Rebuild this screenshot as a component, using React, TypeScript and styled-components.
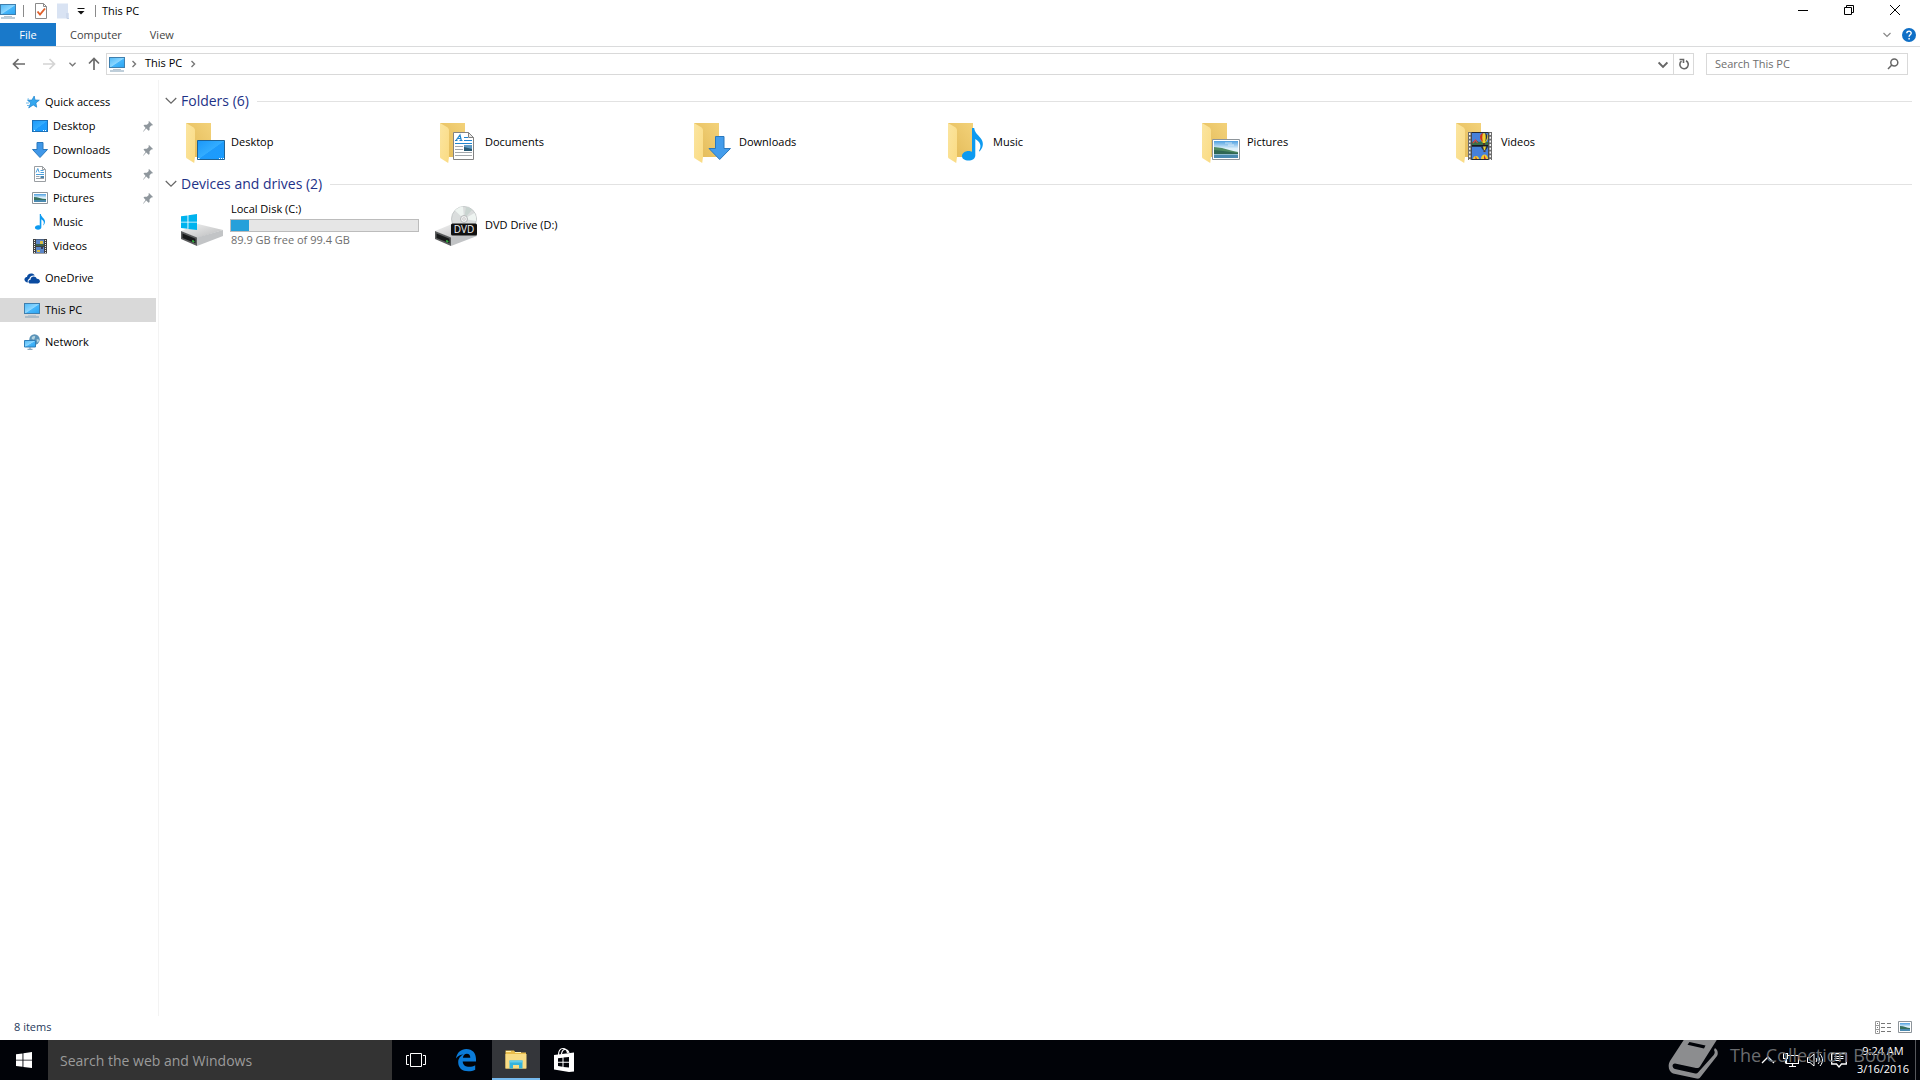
import React from "react";
import styled, { createGlobalStyle, css } from "styled-components";

const GlobalStyle = createGlobalStyle`
  *, *::before, *::after { box-sizing: border-box; }
  body {
    margin: 0;
    background: #fff;
    color: #000;
    font: 11px/16px "Open Sans", "Noto Sans", sans-serif;
  }
  button, input {
    margin: 0;
    padding: 0;
    border: 0;
    background: none;
    color: inherit;
    font: inherit;
  }
  a { color: inherit; text-decoration: none; }
  svg { display: block; flex: none; }
  h2, p, ul { margin: 0; padding: 0; }
  ul { list-style: none; }
`;

/* ---------- layout ---------- */

const Screen = styled.div`
  display: flex;
  flex-direction: column;
  min-height: 100vh;
`;

const TitleBar = styled.header`
  display: flex;
  align-items: flex-start;
  justify-content: space-between;
  height: 23px;
`;

const QuickTools = styled.div`
  display: flex;
  align-items: center;
`;

const ToolButton = styled.button<{ $width?: number }>`
  display: grid;
  place-items: center;
  width: ${(p) => p.$width ?? 22}px;
  height: 22px;
`;

const Separator = styled.span`
  width: 1px;
  height: 12px;
  margin: 0 6px 0 7px;
  background: #8a8a8a;
`;

const WindowButtons = styled.div`
  display: flex;
  align-items: center;
  padding-right: 2px;
`;

const WindowButton = styled.button`
  display: grid;
  place-items: center;
  width: 46px;
  height: 20px;
`;

const Ribbon = styled.div`
  display: flex;
  align-items: center;
  justify-content: space-between;
  height: 24px;
  border-bottom: 1px solid #dadbdc;
`;

const Tabs = styled.div`
  display: flex;
`;

const Tab = styled.button<{ $primary?: boolean }>`
  height: 23px;
  padding: 0 14px;
  color: #444;
  ${(p) =>
    p.$primary &&
    css`
      width: 56px;
      background: #1979ca;
      color: #fff;
    `}
`;

const RibbonTools = styled.div`
  display: flex;
  align-items: center;
  gap: 11px;
  padding-right: 4px;
`;

const PlainButton = styled.button`
  display: grid;
  place-items: center;
`;

const NavBar = styled.div`
  display: flex;
  align-items: center;
  padding: 6px 12px 5px 4px;
`;

const NavButton = styled.button<{ $width: number }>`
  display: grid;
  place-items: center;
  width: ${(p) => p.$width}px;
  height: 22px;
`;

const AddressBox = styled.div`
  display: flex;
  flex: 1;
  align-items: stretch;
  height: 22px;
  margin-right: 12px;
  border: 1px solid #d9d9d9;
`;

const Crumbs = styled.nav`
  display: flex;
  flex: 1;
  align-items: center;
  gap: 5px;
  padding-left: 2px;
`;

const CrumbButton = styled.button`
  padding: 0 2px 2px;
`;

const RefreshButton = styled(PlainButton)`
  width: 20px;
  border-left: 1px solid #d9d9d9;
`;

const SearchBox = styled.label`
  display: flex;
  align-items: center;
  width: 202px;
  height: 22px;
  padding: 0 8px;
  border: 1px solid #d9d9d9;
`;

const SearchInput = styled.input`
  flex: 1;
  min-width: 0;
  outline: 0;
  &::placeholder { color: #6d6d6d; opacity: 1; }
`;

const Body = styled.div`
  display: flex;
  flex: 1;
`;

const Sidebar = styled.nav`
  display: flex;
  flex-direction: column;
  gap: 8px;
  width: 159px;
  padding: 10px 2px 0 0;
  border-right: 1px solid #f3f3f3;
`;

const TreeLink = styled.a<{ $nested?: boolean; $selected?: boolean }>`
  display: flex;
  align-items: center;
  gap: 5px;
  height: 24px;
  padding: 0 3px 0 ${(p) => (p.$nested ? 32 : 24)}px;
  background: ${(p) => (p.$selected ? "#d9d9d9" : "transparent")};
`;

const TreeLabel = styled.span`
  flex: 1;
`;

const Main = styled.main`
  flex: 1;
  padding: 10px 8px 0 6px;
`;

const GroupTitle = styled.h2`
  display: flex;
  align-items: center;
  height: 22px;
  color: #1e3287;
  font-size: 14px;
  font-weight: 400;
  &::after {
    flex: 1;
    height: 1px;
    margin-left: 8px;
    background: #e2e2e2;
    content: "";
  }
`;

const GroupToggle = styled.button`
  display: flex;
  align-items: center;
  gap: 4px;
`;

const Tiles = styled.ul`
  display: flex;
  flex-wrap: wrap;
  padding: 0 0 1px 13px;
`;

const Tile = styled.li`
  width: 254px;
  height: 60px;
`;

const TileLink = styled.a`
  display: flex;
  align-items: center;
  gap: 4px;
  height: 60px;
`;

const DriveInfo = styled.div`
  width: 189px;
  padding-bottom: 2px;
`;

const Capacity = styled.div`
  height: 13px;
  margin-top: 2px;
  border: 1px solid #bcbcbc;
  background: #e6e6e6;
`;

const CapacityUsed = styled.div`
  height: 100%;
  background: #26a0da;
`;

const TileText = styled.p<{ $muted?: boolean }>`
  padding-left: 1px;
  color: ${(p) => (p.$muted ? "#6d6d6d" : "#000")};
`;

const StatusBar = styled.footer`
  display: flex;
  align-items: center;
  justify-content: space-between;
  height: 24px;
  padding: 0 8px 2px 14px;
  color: #1e395b;
`;

const ViewButtons = styled.div`
  display: flex;
  align-items: center;
  gap: 7px;
`;

const Taskbar = styled.footer`
  position: relative;
  display: flex;
  height: 40px;
  overflow: hidden;
  background: #010308;
  color: #fff;
`;

const TaskButton = styled.button<{ $active?: boolean; $wide?: boolean }>`
  display: grid;
  place-items: center;
  width: ${(p) => (p.$wide ? 52 : 48)}px;
  height: 40px;
  border-bottom: 2px solid ${(p) => (p.$active ? "#76b9ed" : "transparent")};
  border-top: 2px solid transparent;
  background: ${(p) => (p.$active ? "#34363a" : "none")};
`;

const TaskSearch = styled.input`
  width: 344px;
  padding: 2px 12px 0;
  background: #333;
  font-size: 14px;
  outline: 0;
  &::placeholder { color: #9b9b9b; opacity: 1; }
`;

const Tray = styled.div`
  display: flex;
  align-items: center;
  gap: 8px;
  margin-left: auto;
`;

const Clock = styled.time`
  display: block;
  padding: 0 6px 0 2px;
  line-height: 18px;
  text-align: center;
`;

const ShowDesktop = styled.button`
  width: 5px;
  height: 40px;
  margin-left: -8px;
  border-left: 1px solid #55575b;
`;

const Watermark = styled.div`
  position: absolute;
  right: 24px;
  bottom: 0;
  display: flex;
  align-items: center;
  gap: 12px;
  height: 40px;
  color: #6a6c6f;
  font-size: 18px;
  pointer-events: none;
`;

const WatermarkText = styled.span`
  padding-bottom: 10px;
`;

/* ---------- icons ---------- */

const Gradients = () => (
  <svg width="0" height="0" aria-hidden="true">
    <defs>
      <linearGradient id="screen" x1="0" y1="0" x2="1" y2="1">
        <stop offset="0" stopColor="#4db8f7" />
        <stop offset=".5" stopColor="#8bd6ff" />
        <stop offset=".55" stopColor="#45b6fb" />
        <stop offset="1" stopColor="#2ba3f0" />
      </linearGradient>
      <linearGradient id="desk" x1="0" y1="0" x2="1" y2="1">
        <stop offset="0" stopColor="#1b97f8" />
        <stop offset=".5" stopColor="#33adff" />
        <stop offset=".52" stopColor="#1e9bfb" />
        <stop offset="1" stopColor="#1a9cff" />
      </linearGradient>
      <linearGradient id="flap" x1="0" y1="0" x2="1" y2="1">
        <stop offset="0" stopColor="#fbe5a0" />
        <stop offset="1" stopColor="#fadb83" />
      </linearGradient>
      <linearGradient id="back" x1="1" y1="0" x2="0" y2="1">
        <stop offset="0" stopColor="#f3d27a" />
        <stop offset="1" stopColor="#e2b956" />
      </linearGradient>
      <linearGradient id="metal" x1="0" y1="0" x2="1" y2="1">
        <stop offset="0" stopColor="#f2f2f2" />
        <stop offset="1" stopColor="#b9babb" />
      </linearGradient>
      <linearGradient id="sky" x1="0" y1="0" x2="0" y2="1">
        <stop offset="0" stopColor="#4d9fe0" />
        <stop offset=".45" stopColor="#dff1fb" />
        <stop offset="1" stopColor="#dff1fb" />
      </linearGradient>
    </defs>
  </svg>
);

const MonitorIcon = () => (
  <svg width="16" height="16" viewBox="0 0 16 16">
    <rect x=".5" y="1.5" width="15" height="10" fill="url(#screen)" stroke="#3f7fae" />
    <path d="M4 13.5h8" stroke="#b9c6d0" />
    <path d="M1 15h14" stroke="#7f9db4" />
  </svg>
);

const StarIcon = () => (
  <svg width="16" height="16" viewBox="0 0 16 16">
    <path d="M10.200 2l.8 4 4.300.2-3.400 2.700.8 4.300-3.500-2.300-4.500 3 2-5L3.500 6.200l4.400-.1z" fill="#35a7ee" stroke="#1b83cf" strokeWidth=".7" />
    <path d="M2 9h3M3 11.500h2M5 5H3.500" stroke="#6bb9ea" />
  </svg>
);

const DesktopIcon = () => (
  <svg width="16" height="16" viewBox="0 0 16 16">
    <rect x=".5" y="2.500" width="15" height="11" fill="url(#desk)" stroke="#1c71b8" />
    <path d="M2 12.500h1M11 12.500h1M13 12.500h1" stroke="#fff" />
  </svg>
);

const DownloadIcon = () => (
  <svg width="16" height="16" viewBox="0 0 16 16">
    <path d="M5 .5h6v7h4.500L8 15.500.500 7.500H5z" fill="#3f97e8" stroke="#2b78bd" />
  </svg>
);

const DocumentIcon = () => (
  <svg width="16" height="16" viewBox="0 0 16 16">
    <path d="M2.500.500h8l3 3v12h-11z" fill="#fff" stroke="#9a9ea2" />
    <path d="M10.500.500v3h3" fill="none" stroke="#9a9ea2" />
    <path d="M4 6.500l1.800-4 1.400 4M8.500 4.500h3M8.500 6.500h3.500M4 8.500h8" fill="none" stroke="#4a9fdc" />
    <path d="M4 10.500h3.500M4 12.500h8" stroke="#9aa3ab" />
    <path d="M8.500 10h3.500v2H8.500z" fill="#4c84ab" />
  </svg>
);

const Landscape = () => (
  <>
    <path d="M.500.500h27v20H.500z" fill="#fff" stroke="#8d949a" />
    <path d="M2 2h24v17H2z" fill="url(#sky)" />
    <path d="M2 8c3 0 5 1 8 1 5 1 9 3 16 4v2H2z" fill="#4f8a61" />
    <path d="M2 11l9 1 15 2v2H2z" fill="#2f6753" />
    <path d="M2 15h24v4H2z" fill="#4a8ab0" />
    <path d="M2 15.500h24" stroke="#91bccf" />
    <path d="M13 4h7M16 6h6" stroke="#fff" opacity=".6" />
  </>
);

const PictureIcon = () => (
  <svg width="16" height="16" viewBox="0 0 16 16">
    <path d="M.500 2.500h15v11H.500z" fill="#fff" stroke="#8d949a" />
    <path d="M2 4h12v8H2z" fill="url(#sky)" />
    <path d="M2 7c4 0 7 2 12 2v2H2z" fill="#36705f" />
    <path d="M2 10h12v2H2z" fill="#4a8ab0" />
  </svg>
);

const Note = () => (
  <path
    d="M10 0h2.200c.5 4.500 3.500 6.500 6.300 10 3.200 4 3.300 8.500-.5 13-.7.8-1.400.4-.8-.5 2.500-4.500 1.300-8.500-3.900-11.500v16.500c0 3-3 5-6.800 5S0 30.800 0 28s3-5 6.500-5c1.500 0 2.500.2 3.500.8z"
    fill="#0d9af0"
  />
);

const MusicIcon = () => (
  <svg width="16" height="16" viewBox="-6 0 33 33"><Note /></svg>
);

const Balloon = ({ y }: { y: number }) => (
  <g transform={`translate(0 ${y})`}>
    <path d="M12 4c0-5 8-5 8 0 0 3-2 5-3 6h-2c-1-1-3-3-3-6z" fill="#f2d12d" />
    <path d="M12 4c0-3 2-4 3-4-1 3-1 6 0 9-2-1-3-3-3-5z" fill="#c4302c" />
    <path d="M17 0c3 1 3 5 0 9 1-3 1-6 0-9z" fill="#26334c" />
    <path d="M15 10h2v2h-2z" fill="#5b3b21" />
  </g>
);

const Film = () => (
  <>
    <path d="M0 0h24v28H0z" fill="#6d6d6d" />
    <path d="M1.750 1v27M22.250 1v27" stroke="#f4f4f4" strokeWidth="1.500" strokeDasharray="2 1.700" />
    <path d="M3.500 0h17v28h-17z" fill="#232a35" />
    <path d="M4 1h16v12H4zM4 14.500h16V27H4z" fill="#4580da" />
    <path d="M4 10l4-2 3 2 3-1 6 1v3H4z" fill="#3a7048" />
    <path d="M5 11l2.500-3 2 3" stroke="#d6404c" strokeWidth="1.200" fill="none" />
    <Balloon y={1} />
    <path d="M4 13h16v1.500H4z" fill="#171b22" />
    <path d="M13 14.500h7c-.5 2-2 3-2.500 4h-2c-.8-1-2.200-2-2.500-4z" fill="#26334c" />
    <path d="M15 14.500h3l-1 3.500h-1z" fill="#f2d12d" />
    <path d="M15.500 18.500h2V20h-2z" fill="#5b3b21" />
    <path d="M5 27c0-4 6-4 6 0zM13 27c0-6 7-6 7 0z" fill="#f2c92d" />
    <path d="M7.500 24l1.500 3H7.500zM16 23l2 4h-2z" fill="#c4302c" />
  </>
);

const VideoIcon = () => (
  <svg width="16" height="16" viewBox="0 0 16 16">
    <path d="M1 1h14v14.500H1z" fill="#414141" />
    <path d="M2.500 2v13M13.500 2v13" stroke="#eee" strokeDasharray="1 1" />
    <path d="M4 1.500h8V8H4zM4 9h8v6H4z" fill="#5c86c8" />
    <path d="M8 3h3v3H8zM5 12h3v2H5z" fill="#d8bd45" />
    <path d="M4 6h8v2H4z" fill="#3b6350" />
    <path d="M9 9h2v2H9z" fill="#33405c" />
  </svg>
);

const CloudIcon = () => (
  <svg width="16" height="16" viewBox="0 0 16 16">
    <path d="M4 12.500C1 12.500-.5 9.800 1 8c.5-.8 1.300-1 2-1 .2-2.500 2.500-4 5-3.500 1.300.2 2.200 1 2.700 2C7.500 5 5.500 7 5.300 9 3.800 9.500 3.400 11 4 12.500z" fill="#0a4ba0" />
    <path d="M6.500 13.500c-2.700 0-2.800-3.600 0-3.800C6.600 6 11.500 5.300 12.800 8.800 16.500 8.700 17 13 14 13.500z" fill="#0a4ba0" />
  </svg>
);

const NetworkIcon = () => (
  <svg width="16" height="16" viewBox="0 0 16 16">
    <circle cx="10.500" cy="5.500" r="5.200" fill="#5b93b8" />
    <path d="M8 3c1.500-1.500 4-1 3 .5s0 2-1.500 2S7 4.500 8 3zM12.500 5.500c1.500-.8 2.500 0 2.500.8s-1 2.200-1.700 2.200z" fill="#b3d3df" />
    <path d="M.5 6.500h11v6.500H.5z" fill="url(#screen)" stroke="#2f7fb8" />
    <path d="M6 13v2M3.500 15.300h5" stroke="#6d93ae" />
  </svg>
);

const PinIcon = () => (
  <svg width="10" height="11" viewBox="0 0 10 11">
    <path d="M6 0l4 4-1 .6-.8-.1-1.700 2 .1 2.500-1 .8L3.300 7.500.300 10.800 0 10.500l2.600-3.600L.500 4.500l1-.8 2.400.1L5.800 2 5.500.700z" fill="#8f979d" />
  </svg>
);

const ChevronDown = ({ size = 8, color = "#777", width = 1 }: { size?: number; color?: string; width?: number }) => (
  <svg width={size} height={size} viewBox="0 0 8 8">
    <path d="M.5 2l3.500 3.500L7.500 2" fill="none" stroke={color} strokeWidth={width} />
  </svg>
);

const ChevronRight = () => (
  <svg width="8" height="8" viewBox="0 0 8 8">
    <path d="M2.500 1l3 3-3 3" fill="none" stroke="#777" strokeWidth="1.400" />
  </svg>
);

const ArrowIcon = ({ rotate = 0, color = "#6b6b6b" }: { rotate?: number; color?: string }) => (
  <svg width="14" height="14" viewBox="0 0 14 14">
    <path d="M13 7H2M6.500 2L1.500 7l5 5" fill="none" stroke={color} strokeWidth="1.700" transform={`rotate(${rotate} 7 7)`} />
  </svg>
);

const WindowsLogo = () => (
  <path d="M0 2.300L6.500 1.400v6.300H0zM7.400 1.200L16 0v7.700H7.400zM0 8.600h6.500v6.200L0 13.900zM7.400 8.600H16V16l-8.600-1.100z" />
);

const DriveBody = () => (
  <>
    <path d="M3 30l17-7 25 6-26 8z" fill="url(#metal)" />
    <path d="M3 30l16 6.500V45L3 38z" fill="#5a5c5d" />
    <path d="M4.500 32.500l13 5.300v4.400l-13-5.300z" fill="#17191a" />
    <path d="M19 36.500L45 29v6L19 45z" fill="#c2c4c6" />
    <path d="M14.500 39.500l1.500.600v1l-1.500-.600z" stroke="#3ee04b" strokeWidth=".8" />
  </>
);

const DiskIcon = () => (
  <svg width="48" height="48" viewBox="0 0 48 48">
    <DriveBody />
    <g transform="translate(3 13)" fill="#00b3ee"><WindowsLogo /></g>
  </svg>
);

const DvdIcon = () => (
  <svg width="48" height="48" viewBox="0 0 48 48">
    <DriveBody />
    <circle cx="32" cy="18" r="12.500" fill="#dadddd" stroke="#bdc1c2" strokeWidth=".8" />
    <path d="M32 18L23 9.500a12.300 12.300 0 0 1 8-3.700zM32 18l12 2a12 12 0 0 0-1.500-8z" fill="#eef4f1" />
    <path d="M32 18l2-12a12 12 0 0 1 6 3z" fill="#c9d4d0" />
    <circle cx="32" cy="18" r="3.500" fill="#f2f2f2" stroke="#b5b8b9" />
    <circle cx="32" cy="18" r="1.300" fill="#fff" stroke="#999" strokeWidth=".5" />
    <rect x="19" y="22.500" width="26" height="12" rx="1.500" fill="#111" />
    <text x="32" y="32" fill="#f1f1f1" fontSize="10" textAnchor="middle">DVD</text>
  </svg>
);

const FolderIcon = ({ children }: { children: React.ReactNode }) => (
  <svg width="48" height="48" viewBox="0 0 48 48">
    <path d="M8 5h25v34H12z" fill="url(#back)" />
    <path d="M8 5l6 3.500c2 1.200 3 2 3 4V39l-.800 6L9 40.500c-.7-.4-1-.8-1-1.700z" fill="url(#flap)" />
    {children}
  </svg>
);

const DesktopArt = () => (
  <g transform="translate(19 22)">
    <path d="M.5.500h27v19H.5z" fill="url(#desk)" stroke="#1f6396" />
    <path d="M1 18.500h1.500M22 18.500h1M24 18.500h1M26 18.500h1" stroke="#fff" />
  </g>
);

const DocumentArt = () => (
  <g transform="translate(21 14)">
    <path d="M.5.500h15l5 5v22H.5z" fill="#fff" stroke="#828282" />
    <path d="M15.500.500v5h5z" fill="#e7e7e7" stroke="#828282" />
    <path d="M3 8.500L7 3l1.300 5.500M5 6.500h3M2 8.500h2.500M6.500 8.500h3M11 5.500h4M11 8.500h8M2 11.500h17" fill="none" stroke="#2186cf" strokeWidth="1.200" />
    <path d="M2 14.500h8M2 17.500h8M2 20.500h17M2 23.500h17" stroke="#a3a8ad" />
    <path d="M11 13h8v6h-8z" fill="#5f9ac2" />
    <path d="M11 15l8 2v2h-8z" fill="#285a74" />
  </g>
);

const FolderArt: Record<string, React.ReactNode> = {
  Desktop: <DesktopArt />,
  Documents: <DocumentArt />,
  Downloads: <path d="M29.500 18.500h8.500v12h6.500L33.700 41.500 23 30.500h6.500z" fill="#439ceb" stroke="#2b78bd" />,
  Music: <g transform="translate(22 10)"><Note /></g>,
  Pictures: <g transform="translate(18 21)"><Landscape /></g>,
  Videos: <g transform="translate(20 14)"><Film /></g>,
};

const CheckPageIcon = () => (
  <svg width="14" height="16" viewBox="0 0 14 16">
    <path d="M1.500.500h8l3 3v12h-11z" fill="#fff" stroke="#8a8a8a" />
    <path d="M9.500.500v3h3" fill="none" stroke="#8a8a8a" />
    <path d="M3.500 8.500l2.500 3L11 5.500" fill="none" stroke="#e0602c" strokeWidth="1.900" />
  </svg>
);

const NewFolderIcon = () => (
  <svg width="14" height="16" viewBox="0 0 14 16">
    <path d="M1 .500h11v9l1 1v5H1z" fill="#d9e3f3" />
    <path d="M11 10v5.500h2" fill="none" stroke="#c3d0e6" />
  </svg>
);

const CustomizeIcon = () => (
  <svg width="8" height="8" viewBox="0 0 8 8">
    <path d="M.5 1.500h7" stroke="#111" />
    <path d="M.5 4h7L4 7.500z" fill="#111" />
  </svg>
);

const TaskViewIcon = () => (
  <svg width="20" height="16" viewBox="0 0 20 16" fill="none" stroke="#fff">
    <path d="M4.500 1.500h11v13h-11zM3 3.500H.5v9H3M17 3.500h2.500v9H17" />
  </svg>
);

const EdgeIcon = () => (
  <svg width="22" height="24" viewBox="0 0 22 24">
    <path
      d="M1 10.500C2 4.500 6 1 11.300 1 17.500 1 21 5.300 21 11v2.500H7.700c.3 4 3.300 5.300 6.500 5.300 2.300 0 4.200-.6 6-1.600v4.600c-2 1-4.300 1.500-7 1.500-6 0-10-3.300-10-9C3.200 10.500 5.500 7.700 8.700 6.300 5.500 6.500 3 8 1 10.500zM7.900 9.800h7.400c0-2.600-1.300-4-3.400-4-2.200 0-3.600 1.500-4 4z"
      fill="#0a7bd8"
      fillRule="evenodd"
    />
  </svg>
);

const ExplorerIcon = () => (
  <svg width="22" height="20" viewBox="0 0 22 20">
    <path d="M.5.500H9l1.500 2H21v16H.5z" fill="#e9bd4c" />
    <path d="M.5 4H21.500v14.500H.5z" fill="#f8dc85" />
    <path d="M1 1.500h5M10 2.500h6" stroke="#fff1b0" />
    <path d="M4.500 18.500v-8h13v8h-3.500v-3.500h-6v3.500z" fill="#35b3dc" />
    <path d="M4.500 10.500h13v2h-13z" fill="#62cdec" />
  </svg>
);

const StoreIcon = () => (
  <svg width="22" height="26" viewBox="0 0 22 26">
    <path d="M5.500 8c0-4 1.500-6.500 4.500-6.500 2.500 0 4 1.500 4.500 4.500M8.500 7C9 4 10 2.500 12 2.500S15.500 4 16 6" fill="none" stroke="#fff" strokeWidth="1.200" />
    <path d="M1 8l20-2.500V24.500L16 25 1 22.500z" fill="#fff" />
    <path d="M5 11.300l4.500-.6v4H5zM10.500 10.600l5.500-.7v4.800h-5.500zM5 15.700h4.500v4L5 19.100zM10.500 15.700H16v4.900l-5.500-.7z" fill="#010308" />
  </svg>
);

const BookIcon = () => (
  <svg width="50" height="40" viewBox="0 0 50 40">
    <path d="M17-2L2 21c-2.500 4-1.500 11 3 12.500L28.500 38.500c2 .4 3 0 4-1.500L49 16c1-1.500 1-4 0-6l-2-2-1 2c1 2 1 3-.3 5L30 32.500c-.7 1-1.500 1.300-2.700 1L7 29c-3-1-3.500-5.500 0-5.500L28 28c1.800.3 3-.1 4-1.500L50-2z" fill="#8c8d8f" />
    <path d="M21.500 2l16 3.500-1.500 3-16.500-3.700z" fill="#010308" />
  </svg>
);

/* ---------- data ---------- */

type TreeItem = { label: string; icon: React.ReactNode; nested?: boolean; pinned?: boolean; selected?: boolean };

const tree: TreeItem[][] = [
  [
    { label: "Quick access", icon: <StarIcon /> },
    { label: "Desktop", icon: <DesktopIcon />, nested: true, pinned: true },
    { label: "Downloads", icon: <DownloadIcon />, nested: true, pinned: true },
    { label: "Documents", icon: <DocumentIcon />, nested: true, pinned: true },
    { label: "Pictures", icon: <PictureIcon />, nested: true, pinned: true },
    { label: "Music", icon: <MusicIcon />, nested: true },
    { label: "Videos", icon: <VideoIcon />, nested: true },
  ],
  [{ label: "OneDrive", icon: <CloudIcon /> }],
  [{ label: "This PC", icon: <MonitorIcon />, selected: true }],
  [{ label: "Network", icon: <NetworkIcon /> }],
];

const folders = ["Desktop", "Documents", "Downloads", "Music", "Pictures", "Videos"];
const disk = { free: 89.9, total: 99.4 };

const Group = ({ title, children }: { title: string; children: React.ReactNode }) => (
  <section>
    <GroupTitle>
      <GroupToggle aria-expanded="true">
        <ChevronDown size={12} color="#666" width={0.8} />
        {title}
      </GroupToggle>
    </GroupTitle>
    <Tiles>{children}</Tiles>
  </section>
);

export default function App() {
  const used = ((disk.total - disk.free) / disk.total) * 100;
  return (
    <Screen>
      <GlobalStyle />
      <TitleBar>
        <QuickTools>
          <MonitorIcon />
          <Separator />
          <ToolButton aria-label="Properties"><CheckPageIcon /></ToolButton>
          <ToolButton aria-label="New folder"><NewFolderIcon /></ToolButton>
          <ToolButton $width={14} aria-label="Customize Quick Access Toolbar"><CustomizeIcon /></ToolButton>
          <Separator />
          This PC
        </QuickTools>
        <WindowButtons>
          <WindowButton aria-label="Minimize">
            <svg width="10" height="10" viewBox="0 0 10 10"><path d="M0 5.500h10" stroke="#000" /></svg>
          </WindowButton>
          <WindowButton aria-label="Restore">
            <svg width="10" height="10" viewBox="0 0 10 10" fill="none" stroke="#000">
              <path d="M.5 2.500h7v7h-7zM2.500 2.500v-2h7v7h-2" />
            </svg>
          </WindowButton>
          <WindowButton aria-label="Close">
            <svg width="10" height="10" viewBox="0 0 10 10"><path d="M0 0l10 10M10 0L0 10" stroke="#000" /></svg>
          </WindowButton>
        </WindowButtons>
      </TitleBar>

      <Ribbon>
        <Tabs>
          <Tab $primary>File</Tab>
          <Tab>Computer</Tab>
          <Tab>View</Tab>
        </Tabs>
        <RibbonTools>
          <PlainButton aria-label="Expand the Ribbon"><ChevronDown color="#888" width={1.2} /></PlainButton>
          <PlainButton aria-label="Help">
            <svg width="14" height="14" viewBox="0 0 14 14">
              <circle cx="7" cy="7" r="7" fill="#0f6fc6" />
              <path d="M4.800 5.300c0-3 4.600-2.800 4.400 0C9.100 6.800 7.100 6.900 7.100 8.700M7.100 10v1.500" fill="none" stroke="#fff" strokeWidth="1.400" />
            </svg>
          </PlainButton>
        </RibbonTools>
      </Ribbon>

      <NavBar>
        <NavButton $width={30} aria-label="Back"><ArrowIcon /></NavButton>
        <NavButton $width={30} aria-label="Forward"><ArrowIcon rotate={180} color="#d4d4d4" /></NavButton>
        <NavButton $width={17} aria-label="Recent locations"><ChevronDown size={7} width={1.5} /></NavButton>
        <NavButton $width={25} aria-label="Up"><ArrowIcon rotate={90} /></NavButton>
        <AddressBox>
          <Crumbs aria-label="Address">
            <MonitorIcon />
            <ChevronRight />
            <CrumbButton>This PC</CrumbButton>
            <ChevronRight />
          </Crumbs>
          <NavButton $width={20} aria-label="Previous locations"><ChevronDown size={10} width={1.5} color="#666" /></NavButton>
          <RefreshButton aria-label="Refresh">
            <svg width="12" height="12" viewBox="0 0 12 12" fill="none" stroke="#666" strokeWidth="1.600">
              <path d="M8 2.800A4.200 4.200 0 1 1 3.500 3.200M1.500 1.500h4V5" />
            </svg>
          </RefreshButton>
        </AddressBox>
        <SearchBox>
          <SearchInput type="search" placeholder="Search This PC" aria-label="Search This PC" />
          <svg width="12" height="12" viewBox="0 0 12 12" fill="none" stroke="#666" strokeWidth="1.500">
            <circle cx="7.300" cy="4.500" r="3.500" />
            <path d="M4.800 7L1 11" />
          </svg>
        </SearchBox>
      </NavBar>

      <Body>
        <Sidebar aria-label="Navigation pane">
          {tree.map((group, i) => (
            <ul key={i}>
              {group.map((item) => (
                <li key={item.label}>
                  <TreeLink href="#" $nested={item.nested} $selected={item.selected}>
                    {item.icon}
                    <TreeLabel>{item.label}</TreeLabel>
                    {item.pinned && <PinIcon />}
                  </TreeLink>
                </li>
              ))}
            </ul>
          ))}
        </Sidebar>
        <Main>
          <Group title="Folders (6)">
            {folders.map((name) => (
              <Tile key={name}>
                <TileLink href="#">
                  <FolderIcon>{FolderArt[name]}</FolderIcon>
                  <TileText>{name}</TileText>
                </TileLink>
              </Tile>
            ))}
          </Group>
          <Group title="Devices and drives (2)">
            <Tile>
              <TileLink href="#">
                <DiskIcon />
                <DriveInfo>
                  <TileText>Local Disk (C:)</TileText>
                  <Capacity><CapacityUsed style={{ width: `${used}%` }} /></Capacity>
                  <TileText $muted>{disk.free} GB free of {disk.total} GB</TileText>
                </DriveInfo>
              </TileLink>
            </Tile>
            <Tile>
              <TileLink href="#">
                <DvdIcon />
                <TileText>DVD Drive (D:)</TileText>
              </TileLink>
            </Tile>
          </Group>
        </Main>
      </Body>

      <StatusBar>
        <span>8 items</span>
        <ViewButtons>
          <PlainButton aria-label="Details view">
            <svg width="16" height="13" viewBox="0 0 16 13" fill="none" stroke="#777">
              <path d="M.5.500h4v12h-4zM.5 4.500h4M.5 8.500h4" stroke="#999" />
              <path d="M2 2.500h1M2 6.500h1M2 10.500h1M6 2.500h4M12 2.500h4M6 6.500h4M12 6.500h4M6 10.500h4M12 10.500h4" />
            </svg>
          </PlainButton>
          <PlainButton aria-label="Large icons view">
            <svg width="14" height="12" viewBox="1 2 14 12">
              <path d="M1.500 2.500h13v11h-13z" fill="#fff" stroke="#8d949a" />
              <path d="M3 4h10v8H3z" fill="url(#sky)" />
              <path d="M3 7c4 0 7 2 10 2v2H3z" fill="#36705f" />
              <path d="M3 10h10v2H3z" fill="#4a8ab0" />
            </svg>
          </PlainButton>
        </ViewButtons>
      </StatusBar>

      <Taskbar>
        <Watermark>
          <BookIcon />
          <WatermarkText>The Collection Book</WatermarkText>
        </Watermark>
        <TaskButton aria-label="Start">
          <svg width="16" height="18" viewBox="0 -1 16 18" fill="#fff"><WindowsLogo /></svg>
        </TaskButton>
        <TaskSearch type="search" placeholder="Search the web and Windows" aria-label="Search the web and Windows" />
        <TaskButton aria-label="Task View"><TaskViewIcon /></TaskButton>
        <TaskButton $wide aria-label="Microsoft Edge"><EdgeIcon /></TaskButton>
        <TaskButton $active aria-label="File Explorer"><ExplorerIcon /></TaskButton>
        <TaskButton aria-label="Store"><StoreIcon /></TaskButton>
        <Tray>
          <PlainButton aria-label="Show hidden icons">
            <svg width="14" height="16" viewBox="0 0 14 16"><path d="M1 11l6-6 6 6" fill="none" stroke="#fff" strokeWidth="1.300" /></svg>
          </PlainButton>
          <PlainButton aria-label="Network status">
            <svg width="16" height="16" viewBox="0 0 16 16" fill="none" stroke="#fff">
              <path d="M5 3.500h10.500v8h-12V6.500M.5 1.500h4v5h-4zM2.500 6.500v5M9.500 12v2.500M6 14.500h7" strokeWidth="1.200" />
            </svg>
          </PlainButton>
          <PlainButton aria-label="Volume">
            <svg width="16" height="16" viewBox="0 0 16 16" fill="none" stroke="#fff">
              <path d="M.5 5.500H3L7 2v12l-4-3.500H.5zM9 6c1 1.300 1 2.700 0 4M11 4c2.200 2.500 2.200 5.500 0 8M13 2c3.300 4 3.300 8 0 12" />
            </svg>
          </PlainButton>
          <PlainButton aria-label="Action Center">
            <svg width="16" height="16" viewBox="0 0 16 16" fill="none" stroke="#fff">
              <path d="M.7 1.500h14.600v10.500H10.500L8 15l-2.500-3H.7z" strokeWidth="1.300" />
              <path d="M3.500 4.500h9M3.500 6.500h9M3.500 8.500h6" />
            </svg>
          </PlainButton>
          <Clock>9:24 AM<br />3/16/2016</Clock>
          <ShowDesktop aria-label="Show desktop" />
        </Tray>
      </Taskbar>
      <Gradients />
    </Screen>
  );
}
